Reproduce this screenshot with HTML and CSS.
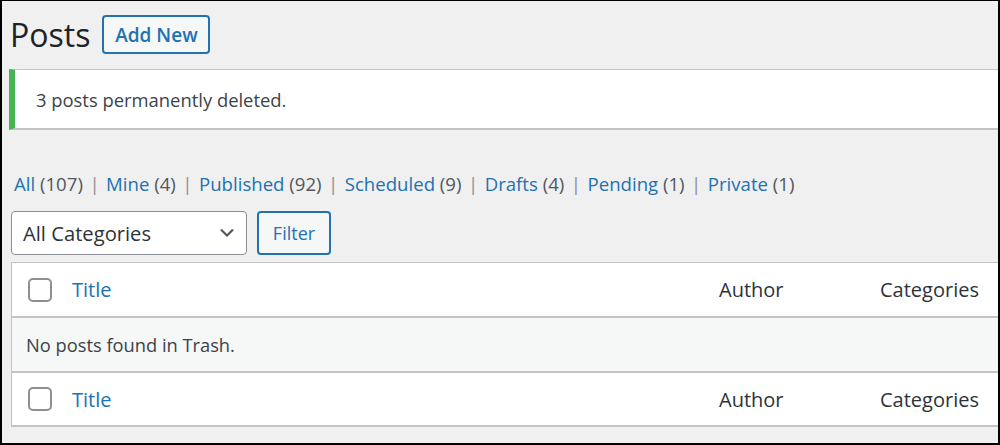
FILE: index.html
```html
<!DOCTYPE html>
<html lang="en">
<head>
<meta charset="utf-8">
<title>Posts</title>
<link rel="stylesheet" href="styles.css">
</head>
<body>
<div class="frame">
  <div class="wrap">
    <div class="heading">
      <h1 class="title">Posts</h1>
      <a class="btn-add" href="#">Add New</a>
    </div>
    <div class="notice"><p>3 posts permanently deleted.</p></div>
    <ul class="views">
      <li><a href="#">All</a> <span class="count">(107)</span><span class="sep">|</span></li>
      <li><a href="#">Mine</a> <span class="count">(4)</span><span class="sep">|</span></li>
      <li><a href="#">Published</a> <span class="count">(92)</span><span class="sep">|</span></li>
      <li><a href="#">Scheduled</a> <span class="count">(9)</span><span class="sep">|</span></li>
      <li><a href="#">Drafts</a> <span class="count">(4)</span><span class="sep">|</span></li>
      <li><a href="#">Pending</a> <span class="count">(1)</span><span class="sep">|</span></li>
      <li><a href="#">Private</a> <span class="count">(1)</span></li>
    </ul>
    <div class="tablenav">
      <div class="select">
        <span>All Categories</span>
        <svg class="chev" width="20" height="20" viewBox="0 0 20 20"><path d="M5 6l5 5 5-5 2 1-7 7-7-7 2-1z" fill="#50575e"/></svg>
      </div>
      <button class="btn-filter" type="button">Filter</button>
    </div>
    <div class="list">
      <div class="row head">
        <div class="cell cb"><span class="box"></span></div>
        <div class="cell col-title"><a href="#">Title</a></div>
        <div class="cell col-author">Author</div>
        <div class="cell col-cat">Categories</div>
      </div>
      <div class="row empty">
        <div class="cell">No posts found in Trash.</div>
      </div>
      <div class="row foot">
        <div class="cell cb"><span class="box"></span></div>
        <div class="cell col-title"><a href="#">Title</a></div>
        <div class="cell col-author">Author</div>
        <div class="cell col-cat">Categories</div>
      </div>
    </div>
  </div>
</div>
</body>
</html>
```

FILE: styles.css
```css
html, body {
  margin: 0;
  padding: 0;
  background: #f0f0f1;
}
.frame {
  box-sizing: border-box;
  width: 1000px;
  height: 445px;
  border-style: solid;
  border-color: #000;
  border-width: 1px 2px 2px 2px;
  overflow: hidden;
  background: #f0f0f1;
  font-family: "Open Sans", "Noto Sans", sans-serif;
  color: #3c434a;
}
.wrap {
  width: 1100px;
  padding-left: 7px;
}
.heading {
  display: flex;
  align-items: center;
  padding-top: 14px;
  height: 39px;
}
.title {
  margin: 0 0 0 1px;
  font-size: 32px;
  font-weight: 400;
  line-height: 39px;
  color: #1d2327;
}
.btn-add {
  box-sizing: border-box;
  margin-left: 12px;
  height: 39px;
  width: 108px;
  justify-content: center;
  display: flex;
  align-items: center;
  border: 2px solid #2271b1;
  border-radius: 4px;
  background: #f6f7f7;
  color: #2271b1;
  font-size: 19px;
  font-weight: 600;
  text-decoration: none;
}
.notice {
  box-sizing: border-box;
  margin-top: 15px;
  height: 61px;
  background: #fff;
  border-top: 1.5px solid #c3c4c7;
  border-bottom: 2px solid #c3c4c7;
  border-left: 6px solid #46b450;
  display: flex;
  align-items: center;
}
.notice p {
  margin: 0 0 0 21px;
  font-size: 18.4px;
  color: #3c434a;
}
.views {
  list-style: none;
  margin: 0;
  padding: 0;
  margin-top: 41px;
  display: flex;
  font-size: 18.6px;
  line-height: 26px;
  margin-left: 5px;
}
.views li {
  white-space: pre;
}
.views a {
  color: #2271b1;
  text-decoration: none;
}
.views .count {
  color: #50575e;
}
.views .sep {
  color: #8c8f94;
  padding: 0 6.5px;
}
.tablenav {
  display: flex;
  gap: 10px;
  margin-top: 14px;
  margin-left: 2px;
}
.select {
  box-sizing: border-box;
  width: 236px;
  height: 44px;
  border: 1.5px solid #8c8f94;
  border-radius: 4px;
  background: #fff;
  display: flex;
  align-items: center;
  justify-content: space-between;
  padding: 0 9px 0 11px;
  font-size: 20.2px;
  color: #2c3338;
}
.chev {
  display: block;
}
.btn-filter {
  box-sizing: border-box;
  width: 74px;
  height: 44px;
  border: 2px solid #2271b1;
  border-radius: 4px;
  background: #f6f7f7;
  color: #2271b1;
  font-family: inherit;
  font-size: 18px;
  padding: 0;
}
.list {
  margin-top: 7px;
  margin-left: 2px;
  background: #fff;
  border: 1.5px solid #c3c4c7;
  border-right: none;
  border-bottom: 2px solid #c3c4c7;
  font-size: 20px;
}
.row {
  display: flex;
  align-items: center;
  height: 53px;
}
.row.head {
  border-bottom: 2px solid #c3c4c7;
}
.row.foot {
  border-top: 2px solid #c3c4c7;
  height: 52px;
}
.row.empty {
  background: #f6f7f7;
  height: 53px;
  font-size: 18.3px;
}
.row.empty .cell {
  padding-left: 14px;
  color: #3c434a;
}
.cell {
  box-sizing: border-box;
}
.cb {
  width: 60px;
  padding-left: 16px;
  display: flex;
  align-items: center;
}
.box {
  box-sizing: border-box;
  width: 24px;
  height: 24px;
  border: 2px solid #8c8f94;
  border-radius: 5px;
  background: #fff;
}
.col-title {
  width: 647px;
}
.col-title a {
  color: #2271b1;
  text-decoration: none;
}
.col-author {
  width: 161px;
  color: #2c3338;
}
.col-cat {
  color: #2c3338;
}
```
